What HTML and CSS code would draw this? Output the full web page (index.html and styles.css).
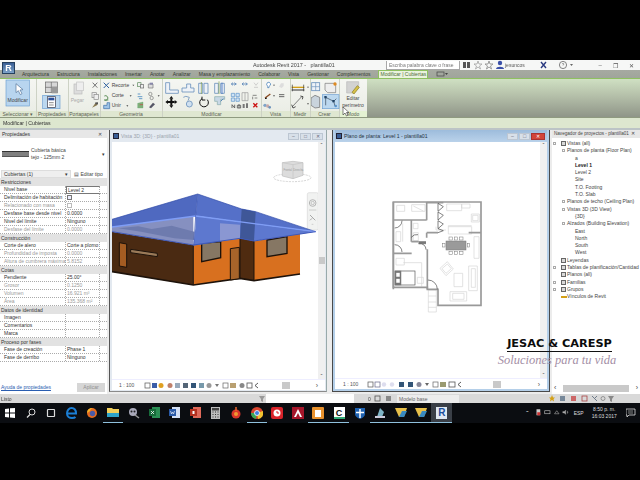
FILE: index.html
```html
<!DOCTYPE html>
<html lang="es">
<head>
  <meta charset="UTF-8" />
  <title>Autodesk Revit 2017 - plantilla01</title>
  <link rel="stylesheet" href="styles.css">
</head>
<body>
  <div class="app">
    <div class="titlebar">
      <div class="logo">R</div>
      <div class="doc-title">Autodesk Revit 2017 -&nbsp;&nbsp; plantilla01</div>
      <div class="search-box">Escriba palabra clave o frase</div>
      <svg class="info-icons" width="32" height="10" viewBox="0 0 32 10">
        <rect x="1" y="2" width="3" height="6" fill="#555"/><rect x="5" y="2" width="3" height="6" fill="#555"/>
        <path d="M16 1l1 3h3l-2.500 2 1 3-2.500-2-2.500 2 1-3-2.500-2h3z" fill="none" stroke="#999" stroke-width=".7"/>
        <path d="M27 1l1 3h3l-2.500 2 1 3-2.500-2-2.500 2 1-3-2.500-2h3z" fill="none" stroke="#888" stroke-width=".8"/>
      </svg>
      <svg class="user-icon" width="8" height="10" viewBox="0 0 8 10"><circle cx="4" cy="3" r="2.200" fill="#3a50a8"/><path d="M0 9c0-3 8-3 8 0z" fill="#3a50a8"/></svg>
      <div class="user-name">jesuncos</div>
      <svg class="help-icons" width="38" height="10" viewBox="0 0 38 10">
        <path d="M2 2l5 6M7 2l-5 6" stroke="#2a3a80" stroke-width="1.400"/>
        <circle cx="24" cy="5" r="3.600" fill="none" stroke="#666" stroke-width=".8"/><path d="M23 4q1-1.500 2 0l-1 1.500" fill="none" stroke="#666" stroke-width=".6"/>
        <path d="M31 4h3l-1.500 2z" fill="#666"/>
      </svg>
      <div class="win-controls">
        <span class="win-btn">&#8211;</span><span class="win-btn">&#10064;</span><span class="win-btn">&#10005;</span>
      </div>
    </div>

    <div class="tabs">
      <span class="tab tab-first">Arquitectura</span>
      <span class="tab">Estructura</span>
      <span class="tab">Instalaciones</span>
      <span class="tab">Insertar</span>
      <span class="tab">Anotar</span>
      <span class="tab">Analizar</span>
      <span class="tab">Masa y emplazamiento</span>
      <span class="tab">Colaborar</span>
      <span class="tab">Vista</span>
      <span class="tab">Gestionar</span>
      <span class="tab">Complementos</span>
      <span class="tab tab-active">Modificar | Cubiertas</span>
      <svg class="tab-extra" width="12" height="6" viewBox="0 0 12 6"><rect x="1" y="1" width="7" height="4" fill="none" stroke="#444" stroke-width=".7"/><path d="M9 2h3l-1.500 2z" fill="#444"/></svg>
    </div>

    <div class="ribbon">
      <div class="rb-group w-select">
        <svg class="rb-icons" width="36" height="32" viewBox="0 69 108 96">
          <rect x="18" y="72" width="70" height="78" fill="#b8d5ef" stroke="#6d9fd2" stroke-width="2"/>
          <path d="M48 83v27l7-6 6 12 5-3-6-11 9-1z" fill="#fff" stroke="#4e6f95" stroke-width="2"/>
          <text x="53" y="138" text-anchor="middle" class="rb-svg-text">Modificar</text>
        </svg>
        <div class="rb-label">Seleccionar &#9662;</div>
      </div>
      <div class="rb-group w-props">
        <svg class="rb-icons" width="31" height="32" viewBox="111 69 93 96">
          <rect x="136" y="78" width="36" height="32" fill="#d7d7d7" stroke="#666" stroke-width="2"/>
          <path d="M136 94h36M154 78v32" stroke="#666" stroke-width="2"/>
          <rect x="155" y="92" width="18" height="20" fill="#9a9a9a"/>
          <rect x="128" y="118" width="52" height="40" fill="#bcd8ef" stroke="#6d9fd2" stroke-width="2"/>
          <rect x="142" y="122" width="24" height="32" fill="#fff" stroke="#334" stroke-width="2"/>
          <rect x="145" y="125" width="18" height="8" fill="#2b4f9a"/>
          <path d="M147 140h14M147 147h14" stroke="#555" stroke-width="2"/>
        </svg>
        <div class="rb-label">Propiedades</div>
      </div>
      <div class="rb-group w-clip">
        <svg class="rb-icons" width="32" height="32" viewBox="207 69 96 96">
          <rect x="222" y="84" width="24" height="30" fill="#ddd" stroke="#bbb" stroke-width="2"/>
          <rect x="230" y="78" width="20" height="26" fill="#eee" stroke="#c4c4c4" stroke-width="2"/>
          <text x="232" y="138" text-anchor="middle" class="rb-svg-text ghost">Pegar</text>
          <path d="M278 80l14 15M292 80l-14 15" stroke="#777" stroke-width="3"/>
          <rect x="276" y="110" width="13" height="15" fill="#eee" stroke="#888" stroke-width="2"/>
          <rect x="282" y="115" width="13" height="15" fill="#eee" stroke="#888" stroke-width="2"/>
          <path d="M276 155l10-13 8-2-3 8z" fill="#8a7a50"/><rect x="286" y="139" width="8" height="6" fill="#555"/>
        </svg>
        <div class="rb-label">Portapapeles</div>
      </div>
      <div class="rb-group w-geom">
        <svg class="rb-icons" width="62" height="32" viewBox="306 69 186 96">
          <path d="M314 80l16 16M330 80l-16 16" stroke="#2e5f9e" stroke-width="3"/>
          <path d="M316 120a7 7 0 1 1 0 12h12" fill="none" stroke="#5f8f5a" stroke-width="3"/>
          <path d="M314 148h10v-8h8v18h-18z" fill="#9ec3e6" stroke="#3a6ea8" stroke-width="2"/>
          <text x="338" y="92" class="rb-svg-text">Recorte</text>
          <text x="338" y="122" class="rb-svg-text">Corte</text>
          <text x="338" y="153" class="rb-svg-text">Unir</text>
          <path d="M400 86h6l-3 4zM392 118h6l-3 4zM382 148h6l-3 4z" fill="#444"/>
          <rect x="416" y="80" width="10" height="12" fill="#eee" stroke="#5a8a5a" stroke-width="2"/><rect x="424" y="86" width="10" height="10" fill="#eee" stroke="#666" stroke-width="2"/>
          <path d="M448 84h14v12h-14z" fill="#ddd" stroke="#777" stroke-width="2"/><path d="M452 80h10v6h-10z" fill="#88a" />
          <path d="M416 122h14M416 114h8M420 128h10" stroke="#4a8ac0" stroke-width="2.500"/>
          <circle cx="454" cy="114" r="5" fill="none" stroke="#777" stroke-width="2"/><circle cx="458" cy="126" r="5" fill="none" stroke="#777" stroke-width="2"/>
          <path d="M476 118h6l-3 4z" fill="#444"/>
          <path d="M416 156v-14l16-4v18z" fill="#7fb07a" stroke="#6a7" stroke-width="1"/><path d="M422 146h10" stroke="#c44" stroke-width="2"/>
          <path d="M450 154l12-14 6 5-12 12z" fill="#556"/>
        </svg>
        <div class="rb-label">Geometr&iacute;a</div>
      </div>
      <div class="rb-group w-mod">
        <svg class="rb-icons" width="99" height="32" viewBox="495 69 297 96">
          <g fill="#eef2f7" stroke="#6d93bd" stroke-width="2.500">
            <path d="M503 80h12v22h26v10h-38z"/>
            <path d="M552 108v-12h14v-12h12v12h10v12z"/>
            <path d="M602 82h12v30h-12zM618 82h12v30h-12z"/>
            <path d="M650 82h11v30h-11zM668 82h11v30h-11z"/>
          </g>
          <path d="M610 78v36M663 76v38" stroke="#7a9a3f" stroke-width="2"/>
          <path d="M672 80v34" stroke="#3e6fc0" stroke-width="2.500"/>
          <path d="M700 84h16M700 84l5-4M700 84l5 4M714 84l-5-4M714 84l-5 4M732 84h16M732 84l5-4M732 84l5 4M748 84l-5-4M748 84l-5 4" stroke="#5a86b8" stroke-width="2.500" fill="none"/>
          <path d="M768 80l6 8M780 80l-6 8M768 94h12" stroke="#bbb" stroke-width="2"/>
          <g fill="#111">
            <path d="M520 120l6 8h-12zM520 156l6-8h-12zM502 138l8-6v12zM538 138l-8-6v12z"/>
            <rect x="517" y="128" width="6" height="20"/><rect x="510" y="135" width="20" height="6"/>
          </g>
          <path d="M556 124q6-6 18 0l-4 10" fill="none" stroke="#6d93bd" stroke-width="2.500"/>
          <circle cx="574" cy="144" r="9" fill="#cfe0f0" stroke="#6d93bd" stroke-width="2.500"/>
          <path d="M612 128a13 13 0 1 0 16 3M612 122v10h10" fill="none" stroke="#111" stroke-width="3"/>
          <path d="M650 122h30v8h-12v16h-10v-10h-8z" fill="#c8d8e6" stroke="#8aa" stroke-width="2"/>
          <path d="M676 128l-8 8" stroke="#5a86b8" stroke-width="3"/>
          <path d="M700 112h10v10h-10zM714 112h10v10h-10zM700 126h10v10h-10zM714 126h10v10h-10z" fill="#cfe3f5" stroke="#5a93c8" stroke-width="2"/>
          <path d="M732 110h18v24h-18zM741 110v24" fill="none" stroke="#999" stroke-width="2"/>
          <path d="M764 118h12M770 126h8M764 122v8" stroke="#555" stroke-width="2"/>
          <path d="M702 156v-10l8 10v-10M718 148h10v8h-10zM723 144v12" fill="none" stroke="#555" stroke-width="2.500"/>
          <path d="M734 156v-12h6v12zM744 156v-14h6v14z" fill="#777"/>
          <path d="M766 142l12 12M778 142l-12 12" stroke="#c11" stroke-width="4"/>
        </svg>
        <div class="rb-label">Modificar</div>
      </div>
      <div class="rb-group w-view">
        <svg class="rb-icons" width="29" height="32" viewBox="795 69 87 96">
          <path d="M811 80q6-4 9 2t-4 9v4h-4v-4q-6-6-1-11z" fill="#fff" stroke="#2f6fb0" stroke-width="2"/>
          <path d="M828 86h6l-3 4z" fill="#444"/>
          <path d="M846 92l6-10h8v8l-6 6z" fill="#ddd"/>
          <path d="M804 126l16-12" stroke="#8a4a20" stroke-width="4"/><path d="M804 128l6-2" stroke="#111" stroke-width="3"/>
          <path d="M828 118h6l-3 4z" fill="#444"/>
          <path d="M846 116h16M846 122h16" stroke="#666" stroke-width="3"/>
          <circle cx="804" cy="148" r="5" fill="#7fa4c8"/><circle cx="812" cy="150" r="5" fill="#c9a9a9"/><circle cx="818" cy="154" r="4" fill="#6d93bd"/>
        </svg>
        <div class="rb-label">Vista</div>
      </div>
      <div class="rb-group w-measure">
        <svg class="rb-icons" width="20" height="32" viewBox="882 69 60 96">
          <path d="M884 94h38" stroke="#d4a017" stroke-width="4"/><path d="M884 102h38" stroke="#333" stroke-width="3"/>
          <path d="M886 86v20M920 86v20" stroke="#333" stroke-width="2"/>
          <path d="M930 92h6l-3 4z" fill="#444"/>
          <path d="M886 152l28-30" stroke="#666" stroke-width="2.500"/><path d="M884 146l4 10 8-4M910 120l8 2-2 8" fill="none" stroke="#333" stroke-width="2.500"/>
          <path d="M930 142h6l-3 4z" fill="#444"/>
        </svg>
        <div class="rb-label">Medir</div>
      </div>
      <div class="rb-group w-create">
        <svg class="rb-icons" width="29" height="32" viewBox="0 69 87 96">
          <rect x="2" y="80" width="24" height="24" fill="#eef2f7" stroke="#6d93bd" stroke-width="2.500"/><path d="M2 92h24M14 80v24" stroke="#6d93bd" stroke-width="2"/>
          <path d="M42 82h32v28h-24l-8-8z" fill="#eee" stroke="#777" stroke-width="2"/><circle cx="72" cy="84" r="5" fill="#e08a20"/>
          <path d="M0 126l12-8 14 6v30l-14 2-12-8z" fill="#c9d4dc" stroke="#666" stroke-width="2"/>
          <rect x="34" y="116" width="50" height="42" fill="#bcd8ef" stroke="#6d9fd2" stroke-width="2"/>
          <path d="M44 124l24 12 8-8M44 124v24M68 136l4 14" stroke="#345" stroke-width="2" fill="none"/>
          <rect x="40" y="120" width="7" height="7" fill="#246"/><rect x="64" y="132" width="7" height="7" fill="#246"/><circle cx="74" cy="150" r="4" fill="#5a93c8"/>
        </svg>
        <div class="rb-label">Crear</div>
      </div>
      <div class="rb-group w-mode">
        <div class="edit-perim">
          <svg width="14" height="13" viewBox="0 0 42 39">
            <path d="M2 2h36v18l-14 16H2z" fill="#d2d2d2" stroke="#bbb" stroke-width="2"/>
            <path d="M18 34l16-20 6 5-16 20z" fill="#d6c14a" stroke="#8a7a20" stroke-width="2"/>
          </svg>
          <span>Editar</span>
          <span>per&iacute;metro</span>
        </div>
        <div class="rb-label rb-label-active">Modo</div>
      </div>
      <div class="rb-empty"></div>
      <svg class="cursor" width="8" height="10" viewBox="0 0 8 10"><path d="M1 0v8l2-2 1.500 3 1.500-1-1.500-2.500H7z" fill="#fff" stroke="#333" stroke-width=".6"/></svg>
    </div>

    <div class="ctxbar">Modificar | Cubiertas</div>

    <div class="workspace">
      <div class="props">
        <div class="pane-head"><span>Propiedades</span><span class="pane-x">&#10005;</span></div>
        <div class="type-sel">
          <div class="swatch"></div>
          <div class="type-name"><div>Cubierta b&aacute;sica</div><div>tejo - 125mm 2</div></div>
          <span class="type-arrow">&#9662;</span>
        </div>
        <div class="inst-row">
          <div class="inst-select"><span>Cubiertas (1)</span><span>&#9662;</span></div>
          <div class="edit-type">&#9636; Editar tipo</div>
        </div>
        <div class="prop-group">Restricciones</div>
        <div class="prop-row"><span>Nivel base</span><span class="val-edit">Level 2</span></div>
        <div class="prop-row"><span>Delimitaci&oacute;n de habitaci&oacute;n</span><span><i class="check on"></i></span></div>
        <div class="prop-row off"><span>Relacionado con masa</span><span><i class="check"></i></span></div>
        <div class="prop-row"><span>Desfase base desde nivel</span><span>0.0000</span></div>
        <div class="prop-row"><span>Nivel del l&iacute;mite</span><span>Ninguno</span></div>
        <div class="prop-row off"><span>Desfase del l&iacute;mite</span><span>0.0000</span></div>
        <div class="prop-group">Construcci&oacute;n</div>
        <div class="prop-row"><span>Corte de alero</span><span>Corte a plomo</span></div>
        <div class="prop-row off"><span>Profundidad de imposta</span><span>0.0000</span></div>
        <div class="prop-row off"><span>Altura de cumbrera m&aacute;xima</span><span>5.8152</span></div>
        <div class="prop-group">Cotas</div>
        <div class="prop-row"><span>Pendiente</span><span>25.00&deg;</span></div>
        <div class="prop-row off"><span>Grosor</span><span>0.1250</span></div>
        <div class="prop-row off"><span>Volumen</span><span>16.921 m&sup3;</span></div>
        <div class="prop-row off"><span>&Aacute;rea</span><span>135.368 m&sup2;</span></div>
        <div class="prop-group">Datos de identidad</div>
        <div class="prop-row"><span>Imagen</span><span></span></div>
        <div class="prop-row"><span>Comentarios</span><span></span></div>
        <div class="prop-row"><span>Marca</span><span></span></div>
        <div class="prop-group">Proceso por fases</div>
        <div class="prop-row"><span>Fase de creaci&oacute;n</span><span>Phase 1</span></div>
        <div class="prop-row"><span>Fase de derribo</span><span>Ninguno</span></div>
        <div class="props-foot">
          <a class="help-link">Ayuda de propiedades</a>
          <span class="apply-btn">Aplicar</span>
        </div>
      </div>

      <div class="view view-3d">
        <div class="view-title">
          <span class="view-ico"></span><span class="view-name">Vista 3D: {3D} - plantilla01</span>
          <span class="view-btns"><i>&#8211;</i><i>&#9633;</i><i>&#10005;</i></span>
        </div>
        <div class="view-body">
          <div class="canvas">
            <svg class="house" width="208" height="238" viewBox="21 36 624 714">
              <ellipse cx="562" cy="143" rx="56" ry="12" fill="none" stroke="#d6d6d6" stroke-width="3" stroke-dasharray="6 3"/>
              <path d="M532 98l32-4 30 4v38l-30 10-32-8z" fill="#dcdcdc" stroke="#bdbdbd" stroke-width="2"/>
              <path d="M564 104v42M532 98l32 6 30-6" fill="none" stroke="#c4c4c4" stroke-width="2"/>
              <text x="548" y="124" class="cube-text">Frontal</text>
              <text x="580" y="124" class="cube-text">Derecha</text>
              <rect x="607" y="188" width="33" height="112" rx="5" fill="#f1f2f1" stroke="#d8d8d8" stroke-width="2"/>
              <circle cx="623" cy="219" r="10" fill="none" stroke="#aaa" stroke-width="2.500"/><circle cx="623" cy="219" r="5" fill="none" stroke="#aaa" stroke-width="2"/>
              <path d="M615 255l16 16M615 271l6-6" stroke="#999" stroke-width="2.500"/>
              <path d="M612 240h22M620 283h5" stroke="#bbb" stroke-width="2"/>

              <path d="M21 305l244 40v120L21 425z" fill="#4a2a12"/>
              <path d="M265 345l140-20v120l-140 20z" fill="#d8701f"/>
              <path d="M405 325l42 6v121l-42-7z" fill="#4f2b10"/>
              <path d="M447 334l138-24v122l-138 20z" fill="#d8701f"/>
              <path d="M21 425l244 40 140-20 42 7 138-20" fill="none" stroke="#1d120a" stroke-width="5"/>
              <path d="M265 345v120M405 325v120M447 332v120" stroke="#1d120a" stroke-width="3"/>
              <path d="M43 338l22 4v70l-22-4z" fill="#a45c22" stroke="#1d120a" stroke-width="3"/>
              <path d="M77 358l80 12v10l-80-12z" fill="#9a7a58" stroke="#1d120a" stroke-width="3"/>
              <path d="M290 340l57-5v48l-57 12z" fill="#867764" stroke="#1d120a" stroke-width="4"/>
              <path d="M486 330l60-10v50l-60 10z" fill="#867764" stroke="#1d120a" stroke-width="4"/>
              <path d="M376 356l27-4v94l-27 4z" fill="#a8642a" stroke="#1d120a" stroke-width="3"/>

              <path d="M21 291l244-36v90L21 305z" fill="#8690c0"/>
              <path d="M40 295l60-6 40 8 60-10 68 18v25l-60-5-100-20z" fill="#6e7bae"/>
              <path d="M21 268l257-76-6 66L21 291z" fill="#4f69c0"/>
              <path d="M278 192l132 45 42 8 180 60-185-24-175-24z" fill="#5570c8"/>
              <path d="M272 258l175 23 185 24-185 28-42-8-140 22 6-52z" fill="#5d78cf"/>
              <path d="M345 280l60 4v42l-60 8z" fill="#8a97d2"/>
              <path d="M410 237l42 8-5 88-42-8z" fill="#3f5798"/>
              <path d="M21 268l257-76 132 45 42 8 180 60" fill="none" stroke="#2f4aa8" stroke-width="2"/>
              <path d="M21 291l251-33 175 23 185 24" fill="none" stroke="#7f9df5" stroke-width="4"/>
              <path d="M21 305l244 40 140-20 42 8 185-28" fill="none" stroke="#3e58b8" stroke-width="3"/>
              <path d="M278 192l-6 66-6 87" fill="none" stroke="#4058b0" stroke-width="2"/>
            </svg>
          </div>
          <div class="vscroll"><span>&#710;</span><div class="vthumb thumb-3d"></div><span>&#711;</span></div>
        </div>
        <div class="view-status">
          <span class="scale">1 : 100</span>
          <svg width="120" height="7" viewBox="0 0 120 7">
            <rect x="1" y="1" width="5" height="5" fill="none" stroke="#555" stroke-width=".7"/><rect x="8" y="1" width="5" height="5" fill="#3a5da8"/>
            <circle cx="17" cy="3.500" r="2.500" fill="#e0a020"/><circle cx="26" cy="3.500" r="2.500" fill="#c0806a"/><rect x="31" y="1" width="5" height="5" fill="#9ab"/><rect x="39" y="1" width="5" height="5" fill="#567"/><rect x="47" y="1" width="5" height="5" fill="#357"/><rect x="55" y="1" width="5" height="5" fill="#79a"/><circle cx="65" cy="3.500" r="2.500" fill="#999"/><path d="M71 2h4l-2 3z" fill="#777"/><rect x="79" y="1" width="5" height="5" fill="none" stroke="#666" stroke-width=".7"/><rect x="86" y="1" width="6" height="5" fill="#b9a070"/><circle cx="98" cy="3.500" r="2.500" fill="#888"/><rect x="103" y="1" width="5" height="5" fill="none" stroke="#555" stroke-width=".8"/><path d="M114 1l-3 2.500 3 2.500" fill="none" stroke="#333" stroke-width=".8"/>
          </svg>
          <div class="hscroll"><div class="hthumb thumb-a"></div></div>
          <span class="arrow-r">&#8250;</span>
        </div>
      </div>

      <div class="view view-plan">
        <div class="view-title">
          <span class="view-ico"></span><span class="view-name">Plano de planta: Level 1 - plantilla01</span>
          <span class="view-btns"><i>&#8211;</i><i>&#9633;</i><i class="close-red">&#10005;</i></span>
        </div>
        <div class="view-body">
          <div class="canvas">
            <svg class="plan" width="125" height="125" viewBox="0 0 375 375">
              <g fill="none" stroke="#d4d4d4" stroke-width="2">
                <path d="M230 42h45v20h-45zM275 42h25v12h-25z"/>
                <path d="M235 110h70v22h-70zM235 110v-3h70"/>
                <path d="M304 72h24v24h-24z"/><path d="M308 76h16v16h-16z"/>
                <path d="M312 140h15v65h-15zM198 110v10h30"/>
                <path d="M296 228h26v74h-26zM304 236h12v56h-12z"/>
                <path d="M252 250h26v40h-26zM240 305h50v28h-50zM248 310h34v18h-34z"/>
                <path d="M210 235l22-20 18 22-22 20z"/><path d="M216 236l16-14 12 14-16 14z"/>
                <path d="M80 46h24v18H80zM125 44h40v20h-40zM130 48l30 15"/>
                <path d="M130 100h14v16h-14zM130 128h15v24h-15z"/>
                <path d="M78 125h14v30H78zM98 100v55"/>
                <path d="M78 205h25v20H78zM142 262h18v18h-18z"/>
                <path d="M175 300h24v66h-24zM175 318h24M175 336h24M175 352h24"/>
                <path d="M100 218h55v72"/>
              </g>
              <g fill="#fff" stroke="#777" stroke-width="1.500">
                <rect x="228" y="153" width="60" height="27" fill="#9a9a9a"/>
                <rect x="237" y="141" width="10" height="9"/><rect x="253" y="141" width="10" height="9"/><rect x="269" y="141" width="10" height="9"/>
                <rect x="237" y="184" width="10" height="9"/><rect x="253" y="184" width="10" height="9"/><rect x="269" y="184" width="10" height="9"/>
                <rect x="218" y="161" width="7" height="10"/><rect x="292" y="161" width="7" height="10"/>
                <rect x="75" y="243" width="60" height="42" stroke="#555" stroke-width="2"/>
                <rect x="75" y="243" width="18" height="42" fill="#777"/>
                <rect x="78" y="248" width="12" height="13"/><rect x="78" y="266" width="12" height="13"/>
              </g>
              <g fill="none" stroke="#999" stroke-width="5">
                <path d="M70 36h263v310H204v-48h-32v-6H70z"/>
                <path d="M70 36v262M170 36v55M170 128v15M172 178v120M70 90h100"/>
                <path d="M124 90v65M124 155h22M70 190h55M204 128h-34M296 128h37"/>
                <path d="M170 38h50"/>
              </g>
              <g fill="none" stroke="#444" stroke-width="2">
                <path d="M204 40l16 10-16 14zM204 66l16 10-16 14zM204 92l16 10-16 14zM204 116l16 6-16 6"/>
                <path d="M124 142a20 20 0 0 1 20-8M146 155h22M146 161h22M146 161a18 18 0 0 1 22 18"/>
                <path d="M174 270a28 28 0 0 1 28 28"/>
                <path d="M96 92a22 22 0 0 1-22 22M74 164a22 22 0 0 1 22 22"/>
              </g>
              <rect x="146" y="156" width="22" height="5" fill="#777"/>
            </svg>
          </div>
          <div class="vscroll"><span>&#710;</span><div class="vthumb thumb-plan"></div><span>&#711;</span></div>
        </div>
        <div class="view-status">
          <span class="scale">1 : 100</span>
          <svg width="96" height="7" viewBox="0 0 96 7">
            <rect x="1" y="1" width="5" height="5" fill="none" stroke="#555" stroke-width=".7"/><rect x="8" y="1" width="5" height="5" fill="none" stroke="#668" stroke-width=".7"/><circle cx="17" cy="3.500" r="2.200" fill="#dde"/><circle cx="25" cy="3.500" r="2.200" fill="#dde"/><rect x="32" y="1" width="5" height="5" fill="#357"/><rect x="41" y="1" width="5" height="5" fill="#357"/><circle cx="52" cy="3.500" r="2.500" fill="#889"/><path d="M58 2h4l-2 3z" fill="#666"/><rect x="66" y="1" width="5" height="5" fill="none" stroke="#666" stroke-width=".7"/><rect x="73" y="1" width="6" height="5" fill="#9a9a70"/><rect x="82" y="1" width="6" height="5" fill="none" stroke="#555" stroke-width=".8"/><path d="M94 1l-3 2.500 3 2.500" fill="none" stroke="#333" stroke-width=".8"/>
          </svg>
          <div class="hscroll"><div class="hthumb thumb-b"></div></div>
          <span class="arrow-r">&#8250;</span>
        </div>
      </div>

      <div class="navigator">
        <div class="pane-head"><span>Navegador de proyectos - plantilla01</span><span class="pane-x">&#10005;</span></div>
        <ul class="tree">
          <li class="t0"><i class="exp"></i><b class="ico"></b>Vistas (all)</li>
          <li class="t1"><i class="exp"></i>Planos de planta (Floor Plan)</li>
          <li class="t2">a</li>
          <li class="t2 cur">Level 1</li>
          <li class="t2">Level 2</li>
          <li class="t2">Site</li>
          <li class="t2">T.O. Footing</li>
          <li class="t2">T.O. Slab</li>
          <li class="t1"><i class="exp"></i>Planos de techo (Ceiling Plan)</li>
          <li class="t1"><i class="exp"></i>Vistas 3D (3D View)</li>
          <li class="t2">{3D}</li>
          <li class="t1"><i class="exp"></i>Alzados (Building Elevation)</li>
          <li class="t2">East</li>
          <li class="t2">North</li>
          <li class="t2">South</li>
          <li class="t2">West</li>
          <li class="t0"><b class="ico"></b>Leyendas</li>
          <li class="t0"><i class="exp"></i><b class="ico"></b>Tablas de planificaci&oacute;n/Cantidad</li>
          <li class="t0"><b class="ico"></b>Planos (all)</li>
          <li class="t0"><i class="exp"></i><b class="ico"></b>Familias</li>
          <li class="t0"><i class="exp"></i><b class="ico"></b>Grupos</li>
          <li class="t0"><b class="ico link"></b>V&iacute;nculos de Revit</li>
        </ul>
        <div class="nav-scroll"><span>&#8249;</span><div class="nav-thumb"></div><span>&#8250;</span></div>
      </div>

      <div class="watermark">
        <div class="wm-title">JESAC &amp; CARESP</div>
        <div class="wm-sub">Soluciones para tu vida</div>
      </div>
    </div>

    <div class="statusbar">
      <span class="status-text">Listo</span>
      <svg class="status-filter" width="8" height="7" viewBox="0 0 8 7"><path d="M1 1h6L5 4v3L3 6V4z" fill="#999"/></svg>
      <div class="status-field"></div>
      <span class="status-zero">0</span>
      <svg width="22" height="7" viewBox="0 0 22 7"><rect x="1" y="1" width="5" height="5" fill="none" stroke="#555" stroke-width=".8"/><rect x="12" y="1" width="5" height="5" fill="#888"/></svg>
      <div class="status-model">Modelo base</div>
      <svg class="status-icons" width="66" height="7" viewBox="0 0 66 7">
        <path d="M3 0l1 2.500h2L4.500 4l.5 2.500L3 5 1 6.500 1.500 4 0 2.500h2z" fill="#d4a017"/>
        <rect x="11" y="1" width="5" height="5" fill="#789"/><rect x="22" y="1" width="5" height="5" fill="#c66"/><rect x="33" y="1" width="5" height="5" fill="none" stroke="#a44" stroke-width=".8"/><path d="M43 1l5 5M48 1l-2 2" stroke="#567" stroke-width=".8"/><circle cx="54" cy="3.500" r="2" fill="none" stroke="#777" stroke-width=".7"/><path d="M59 1h6l-2 3v3l-2-1V4z" fill="#888"/>
      </svg>
    </div>

    <div class="taskbar">
      <span class="tb-item"><svg width="10" height="10" viewBox="0 0 10 10"><path d="M0 1l4-.6V4.500H0zM5 .3L10 0v4.500H5zM0 5.500h4v4L0 9zM5 5.500h5V10l-5-.6z" fill="#fff"/></svg></span>
      <span class="tb-item"><svg width="10" height="10" viewBox="0 0 10 10"><circle cx="6" cy="4" r="3" fill="none" stroke="#ddd"/><path d="M4 6.500L1 9.500" stroke="#ddd" stroke-width="1.200"/></svg></span>
      <span class="tb-item"><svg width="10" height="10" viewBox="0 0 10 10"><rect x="1.500" y="1.500" width="7" height="7" rx=".5" fill="none" stroke="#ddd" stroke-width="1.200"/></svg></span>
      <span class="tb-item"><svg width="12" height="12" viewBox="0 0 12 12"><path d="M1.500 6.500h8.500C10 3 8 1 5.500 1S1 3.500 1 6.500 3.500 11 6 11c1.500 0 3-.5 3.500-1" fill="none" stroke="#1b7fd6" stroke-width="2"/></svg></span>
      <span class="tb-item"><svg width="12" height="12" viewBox="0 0 12 12"><circle cx="6" cy="6" r="5" fill="#e66b1f"/><circle cx="6.500" cy="6.500" r="2.700" fill="#4a5aa8"/><path d="M1 6q0-5 6-5-3 1-3 3z" fill="#f5b52a"/></svg></span>
      <span class="tb-item tb-open"><svg width="12" height="11" viewBox="0 0 12 11"><path d="M0 1h5l1 1h6v8H0z" fill="#f2cf5b"/><rect x="0" y="6" width="12" height="4" fill="#2fa3c8"/></svg></span>
      <span class="tb-item"><svg width="12" height="12" viewBox="0 0 12 12"><circle cx="5" cy="5" r="4" fill="#aab"/><circle cx="3.500" cy="4.500" r="1" fill="#222"/><circle cx="6.500" cy="4.500" r="1" fill="#222"/><path d="M7 8l4 3" stroke="#999" stroke-width="1.500"/></svg></span>
      <span class="tb-item"><svg width="11" height="11" viewBox="0 0 11 11"><rect x="3" y="0" width="8" height="11" fill="#2b8f55"/><rect x="0" y="2" width="7" height="7" fill="#176b3a"/><path d="M2 4l3 3M5 4L2 7" stroke="#fff" stroke-width=".8"/></svg></span>
      <span class="tb-item"><svg width="11" height="11" viewBox="0 0 11 11"><rect x="3" y="0" width="8" height="11" fill="#d4e0f5"/><rect x="0" y="2" width="7" height="7" fill="#2a5aa8"/><path d="M1.500 4l1 3 1-2 1 2 1-3" stroke="#fff" stroke-width=".6" fill="none"/></svg></span>
      <span class="tb-item"><svg width="11" height="11" viewBox="0 0 11 11"><rect x="3" y="0" width="8" height="11" fill="#e06a5a"/><rect x="0" y="2" width="7" height="7" fill="#b5301f"/><rect x="2.500" y="4" width="2" height="3" fill="#fff"/></svg></span>
      <span class="tb-item"><svg width="9" height="12" viewBox="0 0 9 12"><rect width="9" height="12" fill="#bdbdbd"/><rect x="1" y="1" width="7" height="2.500" fill="#444"/><path d="M1.500 5h1M4 5h1M6.500 5h1M1.500 7.500h1M4 7.500h1M6.500 7.500h1M1.500 10h1M4 10h1M6.500 10h1" stroke="#333" stroke-width="1.200"/></svg></span>
      <span class="tb-item"><svg width="12" height="12" viewBox="0 0 12 12"><circle cx="6" cy="7" r="4.500" fill="#d9352a"/><circle cx="6" cy="7" r="2" fill="#f09a30"/><path d="M6 0v4" stroke="#e8662a" stroke-width="1.500"/></svg></span>
      <span class="tb-item tb-open"><svg width="12" height="12" viewBox="0 0 12 12"><circle cx="6" cy="6" r="6" fill="#d9452f"/><path d="M6 6L0 6a6 6 0 0 0 5 6z" fill="#3aa655"/><path d="M6 6l1 6a6 6 0 0 0 5-8z" fill="#f4c430"/><circle cx="6" cy="6" r="2.500" fill="#3f7fe0" stroke="#fff" stroke-width=".8"/></svg></span>
      <span class="tb-item"><svg width="12" height="12" viewBox="0 0 12 12"><rect width="12" height="12" rx="2" fill="#d8232a"/><circle cx="6" cy="6" r="3.500" fill="#fff"/><path d="M6 4v2h2" stroke="#d8232a" fill="none"/></svg></span>
      <span class="tb-item"><svg width="12" height="12" viewBox="0 0 12 12"><rect width="12" height="12" fill="#a6162a"/><path d="M6 2l4 8H8L6 6 4 10H2z" fill="#fff"/></svg></span>
      <span class="tb-item tb-open"><svg width="12" height="12" viewBox="0 0 12 12"><rect width="12" height="12" rx="1" fill="#e8912d"/><rect x="3" y="3" width="6" height="7" fill="#fff"/></svg></span>
      <span class="tb-item tb-open"><span class="tb-letter">C</span></span>
      <span class="tb-item"><svg width="12" height="12" viewBox="0 0 12 12"><path d="M1 1h10v6q0 3-5 5-5-2-5-5z" fill="#1f62b0"/><path d="M6 2v9M2 5.500h8" stroke="#fff" stroke-width="1.500"/></svg></span>
      <span class="tb-item tb-open"><svg width="12" height="12" viewBox="0 0 12 12"><path d="M3 10l3-9 4 4-2 5z" fill="#7fb5c8"/><rect x="1" y="9" width="10" height="2" fill="#ccd"/></svg></span>
      <span class="tb-item tb-open"><svg width="12" height="11" viewBox="0 0 12 11"><path d="M0 1h12L9 10H4z" fill="#e8c04a"/><path d="M4 10L7 4h5L9 10z" fill="#3a8ac0"/></svg></span>
      <span class="tb-item tb-open"><svg width="12" height="11" viewBox="0 0 12 11"><path d="M0 1h12L9 10H4z" fill="#e8c04a"/><path d="M4 10L7 4h5L9 10z" fill="#3a8ac0"/></svg></span>
      <span class="tb-item tb-active tb-open"><span class="tb-revit">R</span></span>
      <div class="tray">
        <span class="tray-up">&#710;</span>
        <svg width="36" height="8" viewBox="0 0 48 10">
          <rect x="2" y="0" width="5" height="8" fill="#ccc"/><rect x="3" y="4" width="4" height="4" fill="#c33"/>
          <rect x="13" y="2" width="7" height="4" fill="none" stroke="#ccc" stroke-width=".8"/>
          <path d="M26 6l3-4 3 4z" fill="none" stroke="#aaa" stroke-width=".8"/>
          <path d="M37 3h2l2-2v6l-2-2h-2zM43 2q2 2 0 4" fill="#aaa" stroke="#aaa" stroke-width=".4"/>
        </svg>
        <span class="tray-lang">ESP</span>
        <div class="clock"><div>8:50 p. m.</div><div>16:03 2017</div></div>
        <svg width="10" height="10" viewBox="0 0 10 10"><path d="M0 1h9v6H3L1 9V7H0z" fill="none" stroke="#ddd" stroke-width=".8"/><path d="M2 3h5M2 5h5" stroke="#ddd" stroke-width=".6"/></svg>
      </div>
    </div>
  </div>
</body>
</html>
```

FILE: styles.css
```css
* {
  box-sizing: border-box;
}

html, body {
  height: 100%;
  margin: 0;
  background: #000;
  font-family: 'Liberation Sans', sans-serif;
  font-size: 5px;
  color: #333;
  overflow: hidden;
}

.app {
  margin-top: 60px;
  width: 640px;
  display: flex;
  flex-direction: column;
  filter: blur(0.4px);
}

/* title bar */
.titlebar {
  height: 10px;
  background: #f6f7f6;
  display: flex;
  align-items: center;
  position: relative;
  z-index: 2;
}

.logo {
  width: 13px;
  height: 12px;
  margin: 5px 0 0 2px;
  background: linear-gradient(#3a5f96, #7ea3c8);
  border: 1px solid #26405f;
  color: #fff;
  font-size: 9px;
  font-weight: bold;
  line-height: 10px;
  text-align: center;
}

.doc-title {
  margin-left: 238px;
  width: 133px;
  font-size: 5.4px;
  color: #444;
  white-space: nowrap;
}

.search-box {
  width: 74px;
  height: 9px;
  line-height: 9px;
  padding-left: 2px;
  background: #fff;
  border: 1px solid #a8a8a8;
  border-top: 0;
  color: #777;
  white-space: nowrap;
  overflow: hidden;
}

.info-icons {
  margin-left: 2px;
}

.user-icon {
  margin-left: 2px;
}

.user-name {
  width: 34px;
  margin-left: 1px;
  color: #555;
}

.help-icons {
  margin-right: 8px;
}

.win-controls {
  display: flex;
  flex: 1;
  justify-content: space-around;
  padding-left: 8px;
  font-size: 6px;
  color: #555;
}

/* tabs */
.tabs {
  height: 8px;
  background: linear-gradient(#a6aaa1, #a0a59b);
  display: flex;
  align-items: center;
  gap: 8px;
  padding-left: 22px;
  color: #343932;
  white-space: nowrap;
}

.tab-active {
  background: #eaf3dd;
  border: 1px solid #8ec060;
  border-bottom: 0;
  height: 8px;
  line-height: 7px;
  padding: 0 1px;
  color: #4d6b3a;
}

/* ribbon */
.ribbon {
  height: 40px;
  display: flex;
  border-top: 1px solid #8ec060;
  border-bottom: 1px solid #8f9a80;
  position: relative;
  background: #f0f2ec;
}

.rb-group {
  display: flex;
  flex-direction: column;
  border-right: 1px solid #cdd2c5;
  background: linear-gradient(#f5f6f2, #e9ece4);
}

.rb-icons {
  flex: none;
}

.rb-svg-text {
  font-size: 15px;
  fill: #444;
}

.ghost {
  fill: #aaa;
}

.rb-label {
  height: 6px;
  flex: none;
  line-height: 6px;
  margin-top: auto;
  text-align: center;
  background: #dfe7d1;
  color: #5a6152;
  white-space: nowrap;
}

.rb-label-active {
  background: #e4f2d2;
}

.w-select { width: 36.500px; }
.w-props { width: 32px; }
.w-clip { width: 32px; }
.w-geom { width: 62px; }
.w-mod { width: 99px; }
.w-view { width: 29px; }
.w-measure { width: 20px; }
.w-create { width: 29px; }
.w-mode { width: 27px; border-right: 0; }

.edit-perim {
  display: flex;
  flex-direction: column;
  align-items: center;
  padding-top: 2px;
  line-height: 7px;
  color: #444;
}

.edit-perim svg {
  margin-bottom: 1px;
}

.rb-empty {
  flex: 1;
  background: linear-gradient(#cfe0c2, #b4bfa9 45%, #8f9588);
}

.cursor {
  position: absolute;
  left: 342px;
  top: 28px;
}

.ctxbar {
  height: 12px;
  line-height: 10px;
  padding-left: 3px;
  background: #dde7cf;
  border-bottom: 2px solid #bcc4c6;
  color: #333;
  font-size: 5.2px;
}

/* panes */
.workspace {
  height: 264px;
  display: flex;
  background: #ececec;
  position: relative;
}

.props {
  width: 107px;
  margin-right: 2px;
  background: #fff;
  display: flex;
  flex-direction: column;
}

.pane-head {
  height: 8px;
  line-height: 8px;
  flex: none;
  padding: 0 2px;
  display: flex;
  justify-content: space-between;
  background: #e7e7e7;
  color: #333;
  white-space: nowrap;
}

.pane-x {
  color: #444;
  padding-right: 3px;
}

.type-sel {
  height: 31px;
  flex: none;
  display: flex;
  align-items: center;
  background: #fff;
}

.swatch {
  width: 27px;
  height: 6px;
  margin: 0 2px;
  background: #808080;
  border-top: 1px solid #333;
  border-bottom: 1px solid #555;
}

.type-name {
  flex: 1;
  line-height: 7px;
  color: #444;
}

.type-arrow {
  padding-right: 2px;
}

.inst-row {
  height: 9px;
  flex: none;
  display: flex;
  align-items: center;
}

.inst-select {
  width: 70px;
  margin-left: 1px;
  padding: 0 2px;
  height: 8px;
  display: flex;
  justify-content: space-between;
  background: #efefef;
  border: 1px solid #ddd;
  line-height: 6px;
}

.edit-type {
  margin-left: 3px;
  color: #444;
  white-space: nowrap;
}

.prop-group {
  height: 8px;
  line-height: 8px;
  flex: none;
  padding-left: 1px;
  background: #e2e2e2;
  color: #333;
}

.prop-row {
  height: 8px;
  line-height: 7px;
  flex: none;
  display: grid;
  grid-template-columns: 66px 34px 7px;
  border-bottom: 1px dotted #aaa;
  color: #333;
  white-space: nowrap;
}

.prop-row span {
  padding-left: 1px;
  border-right: 1px dotted #aaa;
}

.prop-row span:first-child {
  padding-left: 4px;
}

.prop-row::after {
  content: "";
}

.off {
  color: #9a9a9a;
}

.val-edit {
  border: 1px solid #777;
  line-height: 6px;
}

.check {
  display: block;
  width: 5px;
  height: 5px;
  margin-top: 1px;
  border: 1px solid #bbb;
}

.check.on {
  border-color: #777;
  background: #eef;
}

.props-foot {
  margin-top: auto;
  height: 14px;
  padding: 2px 2px 2px 1px;
  display: flex;
  justify-content: space-between;
  align-items: center;
}

.help-link {
  color: #2a5db0;
  text-decoration: underline;
}

.apply-btn {
  width: 28px;
  height: 9px;
  line-height: 9px;
  text-align: center;
  background: #d6d6d6;
  color: #8f8f8f;
}

/* view windows */
.view {
  width: 218px;
  height: 262px;
  display: flex;
  flex-direction: column;
  background: #fff;
}

.view-3d {
  border-left: 1px solid #555;
  border-right: 1px solid #9aa;
  border-bottom: 1px solid #8a8a8a;
  padding: 0 1px 1px 2px;
  background: #e3e9f0;
}

.view-plan {
  margin-left: 5px;
  border: 1px solid #4a4a4a;
  border-top: 0;
  padding: 0 2px 2px;
  background: #b4cfe9;
}

.view-title {
  height: 12px;
  flex: none;
  display: flex;
  align-items: center;
  gap: 2px;
  color: #9aa3ad;
  white-space: nowrap;
}

.view-plan .view-title {
  color: #26323f;
  background: linear-gradient(#9dbcdc, #bad2ea);
  font-size: 5.2px;
}

.view-ico {
  width: 6px;
  height: 6px;
  background: #3b5f97;
  border: 1px solid #223;
  margin-left: 1px;
}

.view-name {
  flex: 1;
}

.view-btns {
  display: flex;
  gap: 1px;
  margin-right: 2px;
  color: #667;
}

.view-btns i {
  width: 11px;
  height: 7px;
  text-align: center;
  font-style: normal;
  background: #d8e0e9;
  border: 1px solid #bcc6d2;
  line-height: 5px;
}

.view-btns .close-red {
  width: 14px;
  background: #d2453a;
  border-color: #a33;
  color: #fff;
}

.view-body {
  flex: 1;
  min-height: 0;
  display: flex;
  background: #fff;
}

.canvas {
  flex: 1;
  position: relative;
  overflow: hidden;
  background: #fff;
}

.house {
  display: block;
}

.cube-text {
  font-size: 8px;
  fill: #999;
  text-anchor: middle;
}

.plan {
  position: absolute;
  left: 35px;
  top: 48px;
}

.vscroll {
  width: 7px;
  flex: none;
  display: flex;
  flex-direction: column;
  justify-content: space-between;
  background: #f0f0f0;
  color: #555;
  font-size: 6px;
  line-height: 6px;
  text-align: center;
}

.vthumb {
  width: 6px;
  height: 7px;
  margin: 0 auto;
  background: #c9c9c9;
}

.thumb-plan {
  background: #f0f0f0;
}

.view-status {
  height: 11px;
  flex: none;
  display: flex;
  align-items: center;
  background: #fff;
  color: #555;
  border-top: 1px solid #eef;
  white-space: nowrap;
}

.scale {
  width: 32px;
  padding-left: 7px;
}

.view-plan .scale {
  width: 32px;
  padding-left: 8px;
}

.hscroll {
  flex: 1;
  height: 7px;
  position: relative;
}

.hthumb {
  position: absolute;
  top: 0;
  width: 8px;
  height: 7px;
  background: #c9c9c9;
}

.thumb-a { left: 18px; }
.thumb-b { left: 30px; }

.arrow-r {
  padding: 0 7px 0 2px;
  font-size: 7px;
}

/* project browser */
.navigator {
  width: 88px;
  margin-left: 2px;
  background: #fff;
  display: flex;
  flex-direction: column;
  position: relative;
  overflow: hidden;
}

.navigator .pane-head {
  font-size: 4.6px;
  color: #444;
}

.tree {
  list-style: none;
  margin: 0;
  padding: 2px 0 0;
  flex: 1;
  line-height: 7.300px;
  color: #444;
  white-space: nowrap;
}

.tree li {
  height: 7.300px;
  position: relative;
}

.t0, .t1 {
  padding-left: 15px;
}

.t2 {
  padding-left: 23px;
}

.cur {
  font-weight: bold;
  color: #222;
}

.exp {
  position: absolute;
  top: 2px;
  left: 1px;
  width: 3px;
  height: 3px;
  border: 1px solid #aaa;
}

.t1 .exp {
  left: 10px;
}

.ico {
  position: absolute;
  left: 9px;
  top: 1px;
  width: 5px;
  height: 5px;
  background: #d8d8d8;
  border: 1px solid #666;
}

.ico.link {
  height: 2px;
  top: 3px;
  width: 6px;
  background: #d4a017;
  border: 0;
}

.nav-scroll {
  height: 7px;
  margin-bottom: 2px;
  flex: none;
  display: flex;
  justify-content: space-between;
  padding: 0 2px;
  color: #444;
  line-height: 6px;
  font-size: 7px;
}

.nav-thumb {
  width: 66px;
  background: #c9c9c9;
}

/* logo over the plan window */
.watermark {
  position: absolute;
  left: 492px;
  top: 207px;
  width: 130px;
  text-align: center;
}

.wm-title {
  width: 105px;
  margin-left: 15px;
  height: 15px;
  border-bottom: 1px solid #111;
  color: #0c0c0c;
  font-family: 'DejaVu Sans', sans-serif;
  font-size: 11.300px;
  font-weight: bold;
  line-height: 13px;
  white-space: nowrap;
}

.wm-sub {
  margin-top: 2px;
  color: #a48fa6;
  font-family: 'Liberation Serif', serif;
  font-size: 12.500px;
  font-style: italic;
  line-height: 13px;
  white-space: nowrap;
}

/* status bar */
.statusbar {
  height: 9px;
  display: flex;
  align-items: center;
  background: #d9d9d9;
  color: #444;
}

.status-text {
  width: 258px;
  padding-left: 1px;
}

.status-filter {
  flex: none;
}

.status-field {
  width: 88px;
  height: 9px;
  background: #fdfdfd;
}

.status-zero {
  width: 11px;
  padding-left: 5px;
  margin-left: 9px;
}

.status-model {
  width: 62px;
  margin-left: 1px;
  height: 8px;
  line-height: 8px;
  padding-left: 2px;
  background: #ececec;
  color: #666;
}

.status-icons {
  margin-left: auto;
  margin-right: 25px;
}

/* taskbar */
.taskbar {
  height: 20px;
  display: flex;
  background: #0b0d11;
  color: #ddd;
}

.tb-item {
  width: 20.560px;
  flex: none;
  display: flex;
  align-items: center;
  justify-content: center;
  border-bottom: 1px solid transparent;
}

.tb-open {
  border-bottom-color: #8fc0dc;
}

.tb-active {
  background: #3a3f47;
}

.tb-letter {
  width: 11px;
  height: 12px;
  background: #fff;
  color: #111;
  font-size: 9px;
  font-weight: bold;
  line-height: 12px;
  text-align: center;
  border-bottom: 2px solid #3a7;
}

.tb-revit {
  width: 11px;
  height: 12px;
  background: #dfe8f2;
  color: #1c4f9c;
  font-size: 10px;
  font-weight: bold;
  line-height: 12px;
  text-align: center;
}

.tray {
  flex: 1;
  display: flex;
  align-items: center;
  padding-left: 74px;
  white-space: nowrap;
}

.tray-up {
  font-size: 8px;
  margin-right: 6px;
}

.tray-lang {
  margin: 0 8px 0 3px;
}

.clock {
  line-height: 7px;
  text-align: center;
  margin-right: 9px;
}
```
